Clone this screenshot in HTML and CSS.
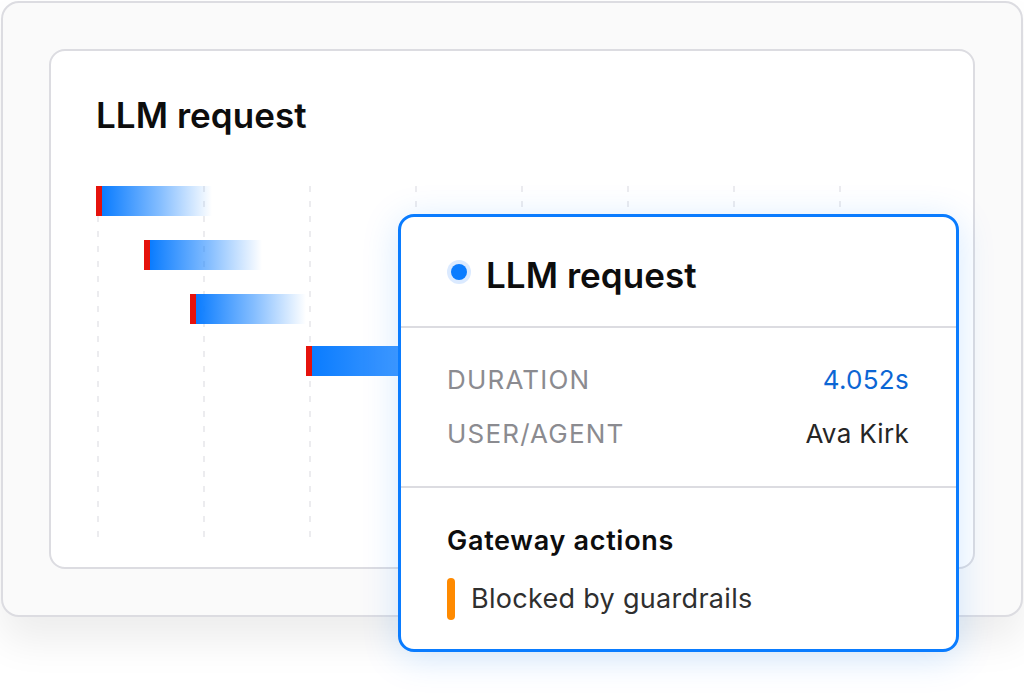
FILE: index.html
```html
<!DOCTYPE html>
<html lang="en">
<head>
<meta charset="utf-8">
<title>LLM request</title>
<link rel="stylesheet" href="styles.css">
</head>
<body>
<div class="frame">
  <div class="card">
    <h1 class="title">LLM request</h1>
    <div class="chart">
      <div class="grid">
        <span class="gl"></span><span class="gl"></span><span class="gl"></span><span class="gl"></span>
        <span class="gl"></span><span class="gl"></span><span class="gl"></span><span class="gl"></span>
      </div>
      <div class="bars">
        <div class="bar" style="margin-left:0;width:116px"></div>
        <div class="bar" style="margin-left:48px;width:118px"></div>
        <div class="bar" style="margin-left:94px;width:116px"></div>
        <div class="bar bar-last" style="margin-left:210px;width:370px"></div>
      </div>
    </div>
  </div>

  <div class="popup">
    <div class="pop-head">
      <span class="dot"></span>
      <span class="pop-title">LLM request</span>
    </div>
    <div class="pop-rows">
      <div class="row"><span class="label">DURATION</span><span class="value blue">4.052s</span></div>
      <div class="row"><span class="label">USER/AGENT</span><span class="value">Ava Kirk</span></div>
    </div>
    <div class="pop-actions">
      <h2 class="actions-title">Gateway actions</h2>
      <div class="action"><span class="flag"></span><span class="action-text">Blocked by guardrails</span></div>
    </div>
  </div>
</div>
</body>
</html>
```

FILE: styles.css
```css
* { box-sizing: border-box; }

html, body {
  margin: 0;
  padding: 0;
  background: #ffffff;
  font-family: Inter, "Noto Sans", "Liberation Sans", sans-serif;
  color: #111111;
}

body {
  width: 1024px;
  height: 694px;
  overflow: hidden;
  padding-top: 1px;
}

.frame {
  position: relative;
  margin: 0 0 0 1px;
  width: 1022px;
  height: 616px;
  border: 2px solid #dcdce1;
  border-radius: 18px;
  background: #fafafa;
  padding: 46px;
  box-shadow: 0 24px 40px rgba(0, 0, 0, 0.075);
}

.card {
  width: 926px;
  height: 520px;
  border: 2px solid #dcdce1;
  border-radius: 16px;
  background: #ffffff;
  padding: 44px 45px 0;
}

.title {
  margin: 0;
  font-size: 35px;
  line-height: 40px;
  font-weight: 600;
  color: #0d0d0d;
  letter-spacing: 0.05px;
}

.chart {
  position: relative;
  margin-top: 51px;
  height: 352px;
}

.grid {
  position: absolute;
  inset: 0;
  display: flex;
  gap: 104px;
  padding-left: 1px;
}

.gl {
  width: 2px;
  height: 100%;
  background: repeating-linear-gradient(to bottom, #ececef 0 6px, transparent 6px 15px);
}

.bars {
  position: relative;
  display: flex;
  flex-direction: column;
  gap: 24px;
}

.bar {
  height: 30px;
  background:
    linear-gradient(to right, #e5120c 0 6px, transparent 6px),
    linear-gradient(to right, #0a7cff 6px, rgba(10, 124, 255, 0.5) 55%, rgba(10, 124, 255, 0) 100%);
}

.bar-last {
  margin-top: -2px;
}

.popup {
  position: absolute;
  left: 395px;
  top: 211px;
  width: 561px;
  border: 3px solid #0a7cff;
  border-radius: 16px;
  background: #ffffff;
  box-shadow: 0 6px 36px rgba(10, 124, 255, 0.17);
}

.pop-head {
  display: flex;
  align-items: center;
  gap: 15px;
  padding: 38px 46px 31px;
}

.dot {
  width: 16px;
  height: 16px;
  margin: 1px 4px 7px;
  border-radius: 50%;
  background: #0a7cff;
  box-shadow: 0 0 0 4px #dbeaff;
}

.pop-title {
  font-size: 35px;
  line-height: 40px;
  font-weight: 600;
  color: #0d0d0d;
  letter-spacing: 0.05px;
}

.pop-rows {
  border-top: 2px solid #dcdce1;
  padding: 36px 46px;
  display: flex;
  flex-direction: column;
  gap: 22px;
}

.row {
  display: flex;
  justify-content: space-between;
  font-size: 26px;
  line-height: 32px;
}

.label {
  color: #8b8b90;
  letter-spacing: 1.2px;
}

.value {
  color: #262626;
  margin-right: 1px;
  letter-spacing: 0.3px;
}

.value.blue {
  color: #0c66d4;
}

.pop-actions {
  border-top: 2px solid #dcdce1;
  padding: 38px 46px 29px;
}

.actions-title {
  margin: 0 0 22px;
  font-size: 27px;
  line-height: 30px;
  font-weight: 600;
  color: #0d0d0d;
  letter-spacing: 0.7px;
}

.action {
  display: flex;
  align-items: center;
  gap: 16px;
  height: 42px;
}

.flag {
  width: 8px;
  height: 42px;
  border-radius: 4px;
  background: #ff8a00;
}

.action-text {
  font-size: 27px;
  line-height: 42px;
  color: #2f2f2f;
  letter-spacing: 0.3px;
}
```
